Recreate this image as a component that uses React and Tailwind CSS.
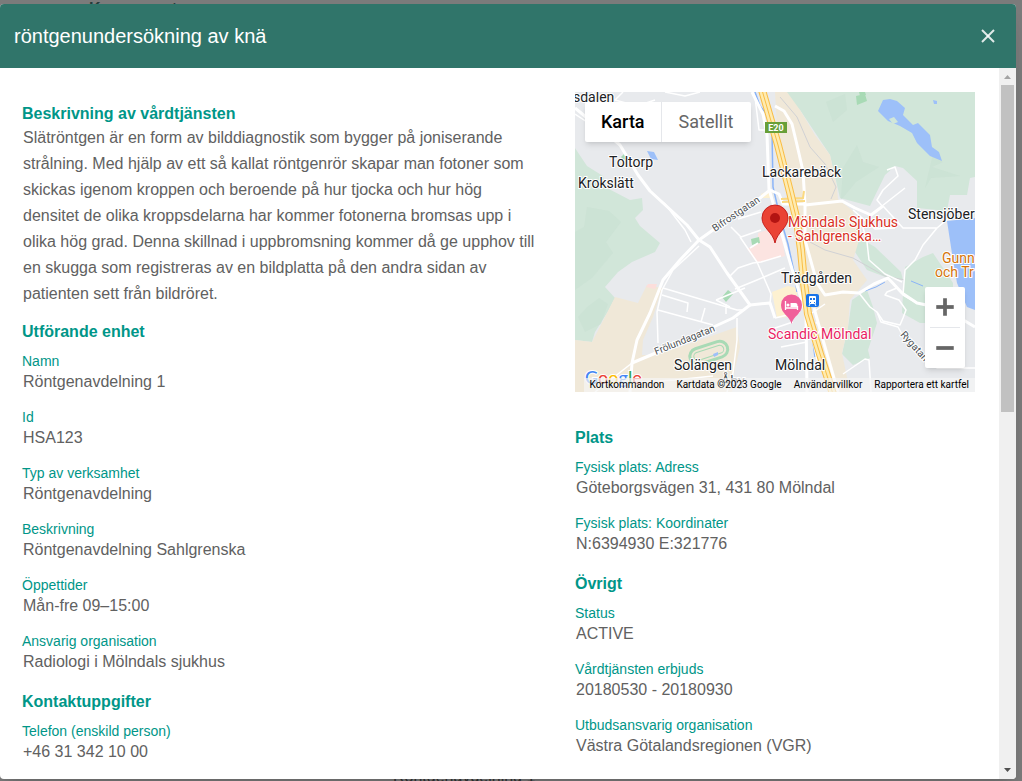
import { X, Plus, Minus } from 'lucide-react';

const unitFields = [
  { label: 'Namn', value: 'Röntgenavdelning 1' },
  { label: 'Id', value: 'HSA123' },
  { label: 'Typ av verksamhet', value: 'Röntgenavdelning' },
  { label: 'Beskrivning', value: 'Röntgenavdelning Sahlgrenska' },
  { label: 'Öppettider', value: 'Mån-fre 09–15:00' },
  { label: 'Ansvarig organisation', value: 'Radiologi i Mölndals sjukhus' },
];

const contactFields = [{ label: 'Telefon (enskild person)', value: '+46 31 342 10 00' }];

const placeFields = [
  { label: 'Fysisk plats: Adress', value: 'Göteborgsvägen 31, 431 80 Mölndal' },
  { label: 'Fysisk plats: Koordinater', value: 'N:6394930 E:321776' },
];

const otherFields = [
  { label: 'Status', value: 'ACTIVE' },
  { label: 'Vårdtjänsten erbjuds', value: '20180530 - 20180930' },
  { label: 'Utbudsansvarig organisation', value: 'Västra Götalandsregionen (VGR)' },
];

const mapLinks = ['Kartdata ©2023 Google', 'Användarvillkor', 'Rapportera ett kartfel'];

const highway = 'M187 -2L203 53L215 100L222 129L226 158L229 191L233 222L245 262L258 302';

const mainRoads = [
  'M0 16L45 53L63 83L75 99L112 133L124 148L105 168L88 188L75 221L62 248L57 271L55 300',
  'M177 0L188 22L192 43L194 97L202 125L212 160L220 187L231 222L232 300',
  'M124 148L145 133L185 106L195 98L204 102L208 112L230 112',
  'M124 148L135 155L152 181L175 213L195 211L200 226',
  'M57 271L95 255L158 226L175 213',
  'M200 14L209 19L217 32L222 53L228 79L230 113L267 109L280 116L296 123L308 114',
  'M230 113L230 148L242 191L250 203L268 200L284 201L299 192L313 186L327 201L342 211L370 217L400 235',
  'M239 216L250 255L263 300',
];

const smallRoads = [
  'M18 0L24 10L40 24M48 0L40 8L62 14L80 8M90 0L110 4L125 0',
  'M0 22L12 30M180 5L184 38L190 38',
  'M124 154L98 178L87 198L82 220L83 251',
  'M87 203L113 211L112 220M83 218L138 233M130 216L126 230M88 196L162 218L170 218M151 212L151 222',
  'M165 145L182 170L196 202L195 211',
  'M154 185L163 176L178 171L186 170L206 164',
  'M160 197L182 188L210 176M141 208L170 196M141 208L155 215',
  'M75 99L90 112L110 138L116 150M183 151L175 156',
  'M156 135L166 145L186 138M163 127L186 120',
  'M312 78L320 75L323 84L308 98L302 108L307 114L330 96',
  'M308 114L318 125L328 136L362 136L348 153L340 168L330 178L328 203L342 211M362 136L375 125',
  'M278 118L286 125L300 137L320 136M285 125L292 150L294 168L310 182L327 190',
  'M284 201L295 215L302 220L308 229L325 233L328 226L331 218L324 208L310 203L312 200L322 196',
  'M302 220L306 230L323 235L328 244L352 268L362 276L400 276',
  'M200 226L225 220M200 236L218 230M205 246L234 240M206 255L232 250',
  'M237 221L250 212M241 230L246 236L238 250L242 268',
  'M268 282L290 267L294 268L296 300',
  'M65 290L100 288L138 284M20 300L57 271',
  'M162 226L162 248L158 281L152 300',
];

const townLabels = [
  { x: -2, y: 10, text: 'sdalen' },
  { x: 34, y: 75, text: 'Toltorp' },
  { x: 3, y: 96, text: 'Krokslätt' },
  { x: 187, y: 85, text: 'Lackarebäck' },
  { x: 333, y: 127, text: 'Stensjöber' },
  { x: 206, y: 191, text: 'Trädgården' },
  { x: 99, y: 278, text: 'Solängen' },
  { x: 200, y: 278, text: 'Mölndal' },
];

const MapDrawing = () => (
  <svg viewBox="0 0 400 300" className="block w-full font-['Roboto',sans-serif]" role="img" aria-label="Karta över Mölndal">
    <rect width="400" height="300" fill="#e8eaed" />

    {/* forest and parks */}
    <path d="M0 56L12 74L28 84L32 96L55 108L67 106L68 118L60 126L65 134L85 151L80 160L57 170L43 180L30 195L40 206L32 221L20 240L17 250L0 248Z" fill="#d1e6d9" />
    <path d="M12 115L34 119L46 130L31 150L38 161L17 186L0 198L0 140L9 135Z" fill="#c8e0d1" opacity=".5" />
    <path d="M12 215L24 206L33 212L26 232L10 240L3 225Z" fill="#c8e0d1" opacity=".5" />
    <path d="M205 0L400 0L400 85L395 86L392 103L375 103L372 119L342 116L342 89L328 76L320 74L310 83L295 114L265 106L255 63L225 18Z" fill="#d1e6d9" />
    <path d="M268 76L282 53L288 70L304 75L281 90L266 108ZM251 10L270 2L272 18L258 30ZM358 62L368 70L357 75L385 84L356 86L350 96Z" fill="#c8e0d1" opacity=".5" />
    <path d="M330 175L348 165L358 161L378 191L378 231L345 231L327 221L328 201Z" fill="#d1e6d9" />
    <path d="M277 208L292 198L298 215L302 231L293 258L295 266L278 273L267 262L273 235Z" fill="#d1e6d9" />
    <path d="M283 145L300 155L326 180L328 188L313 186L292 178L280 160Z" fill="#d1e6d9" />

    {/* built-up areas */}
    <path d="M40 205L63 211L72 193L87 196L78 225L68 248L67 263L82 263L162 235L165 255L158 286L157 300L0 300L0 248L17 250L32 221Z" fill="#f0e8d8" />
    <path d="M200 0L212 0L225 18L240 43L255 63L262 96L263 107L278 119L285 145L278 168L292 188L275 208L273 235L267 261L275 300L258 300L232 191L203 53Z" fill="#f0e8d8" />
    <path d="M172 157L183 151L183 141L205 134L210 164L182 171Z" fill="#fce4e1" />
    <path d="M197 200L213 194L222 196L222 224L202 226ZM186 102L196 98L198 106L187 106Z" fill="#fdf1d1" />
    <path d="M73 192L82 192L80 197L71 195Z" fill="#fcdedb" />
    <path d="M281 4L290 2L292 9L282 13ZM284 0L290 0L291 3L285 4ZM147 205L153 198L158 202L151 210ZM176 147L184 145L185 151L177 153ZM46 65L50 61L53 66L49 68Z" fill="#a8dab5" />
    <g transform="rotate(-18 133 260)" fill="none" stroke="#a8dab5">
      <rect x="114" y="253" width="39" height="16" rx="8" strokeWidth="3" />
      <rect x="118" y="257" width="31" height="8" rx="4" strokeWidth="1" />
    </g>

    {/* water */}
    <path d="M308 8L315 7L322 9L330 16L328 23L338 33L343 31L355 43L357 55L364 60L367 69L355 64L342 51L337 41L325 34L313 29L303 19Z" fill="#9dc0f9" />
    <path d="M314 27L319 25L323 30L318 32Z" fill="#d1e6d9" />
    <path d="M358 8L362 9L362 12L359 12Z" fill="#9dc0f9" />
    <path d="M372 129L400 126L400 218L392 215L382 191L378 168Z" fill="#9dc0f9" />
    <path d="M72 59L79 60L83 68L76 67ZM138 262L143 260L143 263L139 265Z" fill="#9dc0f9" />
    <path d="M180 0L185 14L195 26L197 40L198 95L205 125L213 152L219 180L222 200M238 250L240 265" fill="none" stroke="#8ab4f8" strokeWidth="1.5" />
    <path d="M290 199L301 195L310 190M336 189L348 194" fill="none" stroke="#8ab4f8" />

    {/* railway and streets */}
    <path d="M256 107L261 95L250 72L235 55L222 25L205 5M235 150L250 158L278 166L310 184L330 188" fill="none" stroke="#d0d1d4" />
    {smallRoads.map((d) => (
      <path key={d} d={d} fill="none" stroke="#fff" strokeWidth="1.5" strokeLinejoin="round" />
    ))}
    {mainRoads.map((d) => (
      <path key={d} d={d} fill="none" stroke="#fff" strokeWidth="3" strokeLinejoin="round" />
    ))}
    <path d="M206 107L228 106L229 99M207 110L230 109" fill="none" stroke="#fbd981" strokeWidth="2" />
    <path d={highway} fill="none" stroke="#f9bd45" strokeWidth="8" />
    <path d={highway} fill="none" stroke="#feebb0" strokeWidth="6" />
    <path d={highway} fill="none" stroke="#f9bd45" strokeWidth="1" />

    {/* road sign */}
    <rect x="190" y="30" width="22" height="11" fill="#689f38" />
    <text x="201" y="39" textAnchor="middle" fontSize="9" fontWeight="700" fill="#fff">E20</text>

    {/* street names */}
    <g fontSize="10" fill="#4b5054" stroke="#fff" strokeWidth="2" paintOrder="stroke">
      <text transform="translate(140 140) rotate(-34)">Bifrostgatan</text>
      <text transform="translate(81 263) rotate(-22)">Frölundagatan</text>
      <text transform="translate(325 243) rotate(48)">Rygatan</text>
      <text x="146" y="294" fontSize="14">Åby</text>
    </g>

    <g fontSize="14" fill="#202124" stroke="#fff" strokeWidth="2" strokeLinejoin="round" paintOrder="stroke">
      {townLabels.map((town) => (
        <text key={town.text} x={town.x} y={town.y}>{town.text}</text>
      ))}
      <text x="213" y="135" fill="#d93025">Mölndals Sjukhus</text>
      <text x="213" y="149" fill="#d93025">- Sahlgrenska…</text>
      <text x="193" y="247" fill="#e91e63">Scandic Mölndal</text>
      <text x="367" y="171" fill="#d5740b">Gunn</text>
      <text x="360" y="185" fill="#d5740b">och Tr</text>
    </g>

    {/* station */}
    <rect x="231" y="202" width="13" height="13" rx="2" fill="#1a73e8" />
    <rect x="234" y="204" width="7" height="8" rx="1" fill="#fff" />
    <path d="M235 206h2v2h-2zM238 206h2v2h-2zM235 210h1v1h-1zM239 210h1v1h-1z" fill="#1a73e8" />
    <path d="M235 212l-1 2M240 212l1 2" stroke="#fff" />

    {/* hotel pin */}
    <path d="M216.500 232C215 224 206 222 206 213A10.500 10.500 0 0 1 227 213C227 222 218 224 216.500 232Z" fill="#f0609a" />
    <path d="M210.500 209v9M210.500 216h12M222.500 218v-4" fill="none" stroke="#fff" strokeWidth="1.300" />
    <path d="M215.500 211h5a2 2 0 0 1 2 2v2h-7z" fill="#fff" />
    <circle cx="213" cy="213" r="1.500" fill="#fff" />

    {/* place marker */}
    <path d="M200 151C198 140 187 136 187 126A13 13 0 0 1 213 126C213 136 202 140 200 151Z" fill="#ea4335" stroke="#c5221f" strokeWidth="1" />
    <circle cx="200" cy="126" r="5" fill="#b31412" />

    <text x="10" y="292" fontSize="18" fontWeight="500" className="font-['Lato',sans-serif]" stroke="#fff" strokeWidth="2" paintOrder="stroke">
      <tspan fill="#4285f4">G</tspan>
      <tspan fill="#ea4335">o</tspan>
      <tspan fill="#fbbc04">o</tspan>
      <tspan fill="#4285f4">g</tspan>
      <tspan fill="#34a853">l</tspan>
      <tspan fill="#ea4335">e</tspan>
    </text>
  </svg>
);

const LocationMap = () => (
  <div className="relative w-[400px] h-[300px] overflow-hidden font-['Roboto',sans-serif]">
    <MapDrawing />
    <div className="absolute left-[10px] top-[10px] flex h-10 bg-white rounded-xs shadow-md text-lg">
      <button type="button" className="px-4 font-medium text-black">Karta</button>
      <button type="button" className="px-[17px] border-l border-gray-200 text-[#666]">Satellit</button>
    </div>
    <div className="absolute right-[10px] bottom-6 w-10 bg-white rounded-xs shadow-md text-[#666]">
      <button type="button" aria-label="Zooma in" className="flex w-full h-10 items-center justify-center">
        <Plus size={30} strokeWidth={3} strokeLinecap="butt" />
      </button>
      <div className="mx-[5px] h-px bg-gray-200" />
      <button type="button" aria-label="Zooma ut" className="flex w-full h-10 items-center justify-center">
        <Minus size={30} strokeWidth={3} strokeLinecap="butt" />
      </button>
    </div>
    <div className="absolute right-0 bottom-0 flex h-[14px] bg-[#f5f5f5]/70 text-[10px] leading-[14px] text-black whitespace-nowrap">
      <button type="button" className="px-[6px]">Kortkommandon</button>
      {mapLinks.map((link) => (
        <a key={link} href="#" className="px-[6px]">{link}</a>
      ))}
    </div>
  </div>
);

const Section = ({ title, fields }) => (
  <section className="mb-5">
    <h2 className="text-base leading-5 font-bold text-[#009688]">{title}</h2>
    <dl className="mt-[9px] flex flex-col gap-[15px]">
      {fields.map((field) => (
        <div key={field.label}>
          <dt className="text-sm leading-5 text-[#009688]">{field.label}</dt>
          <dd className="mt-px text-base leading-5 pl-px">{field.value}</dd>
        </div>
      ))}
    </dl>
  </section>
);

const Scrollbar = () => (
  <div className="w-[17px] shrink-0 bg-[#f0f0f0] flex flex-col items-center" aria-hidden="true">
    <svg width="17" height="17" viewBox="0 0 17 17">
      <path d="M5 11L8.500 7L12 11Z" fill="#a3a3a3" />
    </svg>
    <div className="w-[13px] h-[46%] bg-[#c1c1c1]" />
    <svg width="17" height="17" viewBox="0 0 17 17" className="mt-auto">
      <path d="M5 6L8.500 10L12 6Z" fill="#505050" />
    </svg>
  </div>
);

const App = () => (
  <div className="relative h-screen overflow-hidden bg-[#7b7b7b] pt-1 pb-[2px] pr-[6px] font-['Liberation_Sans',Arial,sans-serif]">
    {/* page behind the dialog */}
    <p className="absolute left-[89px] top-0 -mt-px text-base leading-5 font-bold text-[#243c3a]">Konsument</p>
    <p className="absolute left-[393px] -bottom-[6px] text-base leading-5 text-[#333]">Röntgenavdelning 1</p>

    <div role="dialog" aria-labelledby="dialog-title" className="relative h-full flex flex-col rounded overflow-hidden bg-white shadow-xl">
      <header className="h-16 shrink-0 flex items-center justify-between pl-[14px] pr-4 bg-[#30756a] text-white">
        <h1 id="dialog-title" className="text-xl">röntgenundersökning av knä</h1>
        <button type="button" aria-label="Stäng" className="text-white/85">
          <X size={24} strokeWidth={2} strokeLinecap="butt" />
        </button>
      </header>

      <div className="flex flex-1 min-h-0">
        <main className="flex flex-1 min-w-0 overflow-hidden pl-[22px] pr-6 pt-6 text-[#616161]">
          <div className="flex-1 min-w-0 pt-3">
            <section className="mb-[15px]">
              <h2 className="text-base leading-5 font-bold text-[#009688]">Beskrivning av vårdtjänsten</h2>
              <p className="mt-px pl-px pr-9 text-base leading-[26px]">
                Slätröntgen är en form av bilddiagnostik som bygger på joniserande strålning. Med hjälp av ett så
                kallat röntgenrör skapar man fotoner som skickas igenom kroppen och beroende på hur tjocka och hur hög
                densitet de olika kroppsdelarna har kommer fotonerna bromsas upp i olika hög grad. Denna skillnad i
                uppbromsning kommer då ge upphov till en skugga som registreras av en bildplatta på den andra sidan av
                patienten sett från bildröret.
              </p>
            </section>
            <Section title="Utförande enhet" fields={unitFields} />
            <Section title="Kontaktuppgifter" fields={contactFields} />
          </div>

          <div className="w-[400px] shrink-0">
            <LocationMap />
            <div className="pt-9">
              <Section title="Plats" fields={placeFields} />
              <Section title="Övrigt" fields={otherFields} />
            </div>
          </div>
        </main>
        <Scrollbar />
      </div>
    </div>
  </div>
);

export default App;
